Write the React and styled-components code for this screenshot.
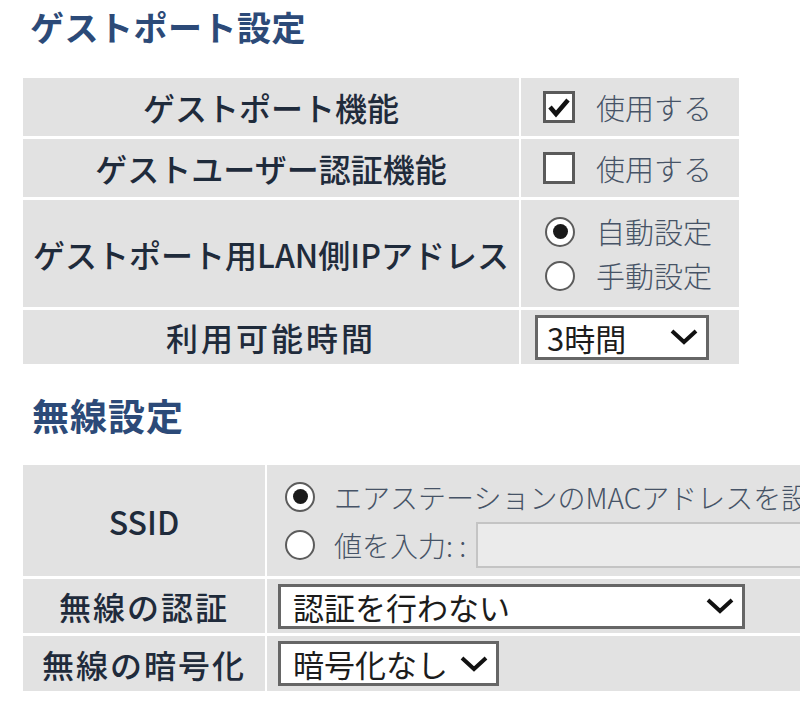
import React from "react";
import styled, { createGlobalStyle } from "styled-components";

const Global = createGlobalStyle`
  html, body { margin: 0; padding: 0; background: #ffffff; overflow: hidden; }
  body { font-family: "Noto Sans CJK JP", "Noto Sans", sans-serif; width: 800px; height: 710px; }
`;

const Page = styled.div`
  padding: 10px 0 0 23px;
  width: 1200px;
`;

const SectionTitle = styled.h2`
  margin: 0 0 ${(p) => p.$gap}px 0;
  padding-left: ${(p) => p.$indent}px;
  font-size: ${(p) => p.$size}px;
  line-height: 1;
  font-weight: 700;
  color: #2c4a78;
  letter-spacing: ${(p) => p.$ls || 0.5}px;
`;

const FormTable = styled.div`
  display: grid;
  grid-template-columns: ${(p) => p.$cols};
  column-gap: 2px;
  row-gap: 3px;
  margin-bottom: ${(p) => p.$mb}px;
`;

const LabelCell = styled.div`
  background: #e2e2e2;
  height: ${(p) => p.$h}px;
  display: flex;
  align-items: center;
  justify-content: center;
  font-size: ${(p) => p.$size || 32}px;
  font-weight: 500;
  color: #1f2b3b;
  letter-spacing: ${(p) => p.$ls || 0}px;
  white-space: nowrap;
`;

const ValueCell = styled.div`
  background: #e2e2e2;
  height: ${(p) => p.$h}px;
  display: flex;
  flex-direction: column;
  justify-content: center;
  gap: ${(p) => p.$gap || 0}px;
  padding-left: ${(p) => p.$pl}px;
  box-sizing: border-box;
  overflow: hidden;
`;

const OptionLine = styled.div`
  display: flex;
  align-items: center;
  gap: ${(p) => p.$gap}px;
  height: ${(p) => p.$h || 40}px;
  white-space: nowrap;
`;

const InlineField = styled.span`
  display: flex;
  align-items: center;
  gap: 10px;
`;

const OptionText = styled.span`
  font-size: ${(p) => p.$size || 29}px;
  font-weight: 300;
  color: #465366;
  line-height: 1;
`;

const Box = styled.span`
  width: 32px;
  height: 32px;
  box-sizing: border-box;
  border: 3px solid #5a5a5a;
  background: #ffffff;
  display: flex;
  align-items: center;
  justify-content: center;
  flex: none;
`;

const RadioRing = styled.span`
  width: 30px;
  height: 30px;
  box-sizing: border-box;
  border-radius: 50%;
  border: 2.5px solid #5c5c5c;
  background: #ffffff;
  display: flex;
  align-items: center;
  justify-content: center;
  flex: none;
  &::after {
    content: "";
    display: ${(p) => (p.$on ? "block" : "none")};
    width: 15px;
    height: 15px;
    border-radius: 50%;
    background: #1a1a1a;
  }
`;

const SelectBox = styled.div`
  width: ${(p) => p.$w}px;
  height: 45px;
  box-sizing: border-box;
  border: 3px solid #666666;
  background: #ffffff;
  display: flex;
  align-items: center;
  justify-content: space-between;
  padding: 0 8px 0 ${(p) => p.$pl || 9}px;
  font-size: 31px;
  font-weight: 400;
  color: #1c1c1c;
  white-space: nowrap;
`;

const TextField = styled.div`
  width: 400px;
  height: 46px;
  box-sizing: border-box;
  border: 2px solid #c4c4c4;
  background: #ebebeb;
`;

const Chevron = () => (
  <svg width="28" height="16" viewBox="0 0 28 16" style={{ flex: "none" }}>
    <polyline points="2,2 14,13 26,2" fill="none" stroke="#111" strokeWidth="4" strokeLinejoin="miter" />
  </svg>
);

const Check = () => (
  <svg width="24" height="22" viewBox="0 0 24 22">
    <polyline points="3,11 9,18 21,4" fill="none" stroke="#111" strokeWidth="4.5" />
  </svg>
);

export default function App() {
  return (
    <>
      <Global />
      <Page>
        <SectionTitle $indent={7} $size={34} $gap={34}>ゲストポート設定</SectionTitle>
        <FormTable $cols="496px 218px" $mb={33}>
          <LabelCell $h={58}>ゲストポート機能</LabelCell>
          <ValueCell $h={58} $pl={22}>
            <OptionLine $gap={21}>
              <Box><Check /></Box>
              <OptionText>使用する</OptionText>
            </OptionLine>
          </ValueCell>

          <LabelCell $h={58}>ゲストユーザー認証機能</LabelCell>
          <ValueCell $h={58} $pl={22}>
            <OptionLine $gap={21}>
              <Box />
              <OptionText>使用する</OptionText>
            </OptionLine>
          </ValueCell>

          <LabelCell $h={107}>ゲストポート用LAN側IPアドレス</LabelCell>
          <ValueCell $h={107} $pl={24} $gap={4}>
            <OptionLine $gap={21}>
              <RadioRing $on />
              <OptionText>自動設定</OptionText>
            </OptionLine>
            <OptionLine $gap={21}>
              <RadioRing />
              <OptionText>手動設定</OptionText>
            </OptionLine>
          </ValueCell>

          <LabelCell $h={54} $ls={3}>利用可能時間</LabelCell>
          <ValueCell $h={54} $pl={14}>
            <SelectBox $w={174}>
              <span>3時間</span>
              <Chevron />
            </SelectBox>
          </ValueCell>
        </FormTable>

        <SectionTitle $indent={9} $size={37} $ls={1} $gap={31}>無線設定</SectionTitle>
        <FormTable $cols="242px 800px" $mb={0}>
          <LabelCell $h={111}>SSID</LabelCell>
          <ValueCell $h={111} $pl={18} $gap={8}>
            <OptionLine $gap={19}>
              <RadioRing $on />
              <OptionText $size={28}>エアステーションのMACアドレスを設定</OptionText>
            </OptionLine>
            <OptionLine $gap={19}>
              <RadioRing />
              <InlineField>
                <OptionText $size={28}>値を入力: :</OptionText>
                <TextField />
              </InlineField>
            </OptionLine>
          </ValueCell>

          <LabelCell $h={54} $ls={2}>無線の認証</LabelCell>
          <ValueCell $h={54} $pl={11}>
            <SelectBox $w={467} $pl={12}>
              <span>認証を行わない</span>
              <Chevron />
            </SelectBox>
          </ValueCell>

          <LabelCell $h={55} $ls={2}>無線の暗号化</LabelCell>
          <ValueCell $h={55} $pl={11}>
            <SelectBox $w={221} $pl={12}>
              <span>暗号化なし</span>
              <Chevron />
            </SelectBox>
          </ValueCell>
        </FormTable>
      </Page>
    </>
  );
}
